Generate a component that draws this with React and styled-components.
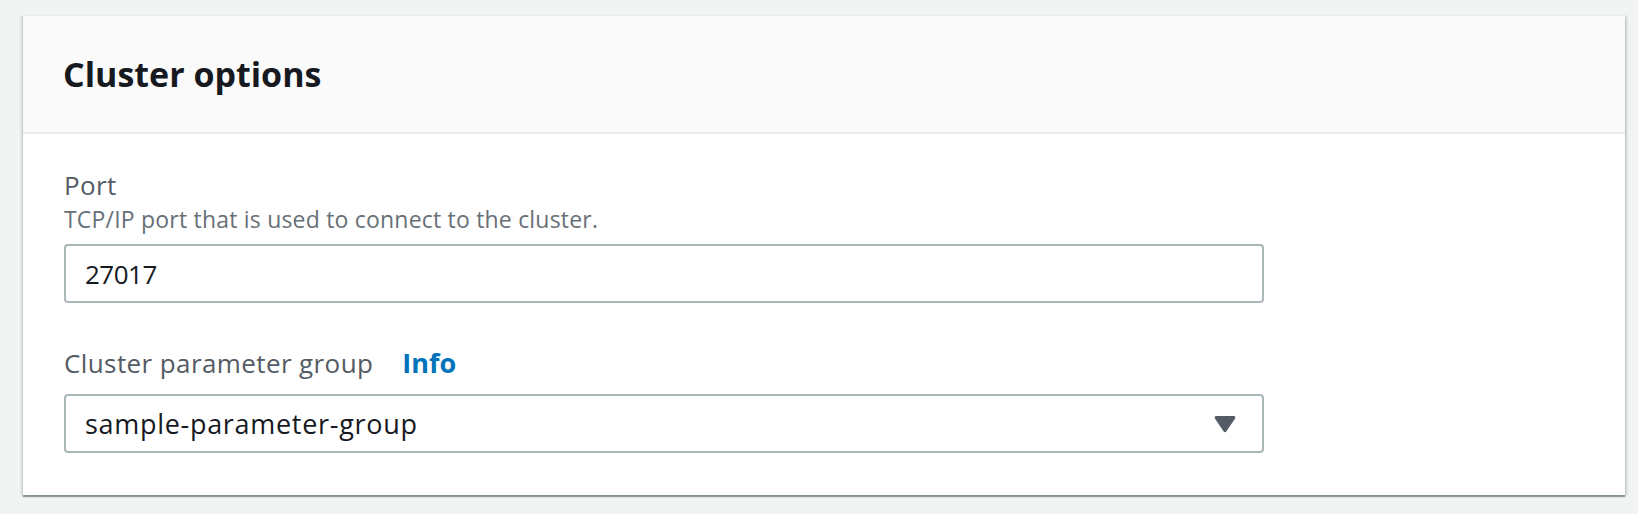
import React from "react";
import styled, { createGlobalStyle } from "styled-components";

const GlobalStyle = createGlobalStyle`
  html, body {
    margin: 0;
    padding: 0;
    background: #f2f3f3;
    font-family: "Open Sans", "Liberation Sans", sans-serif;
  }
`;

const Page = styled.div`
  padding: 15px 13px 20px 23px;
`;

const Card = styled.section`
  background: #ffffff;
  border-top: 1px solid #eaeded;
  box-shadow: 0 2px 1px 0 rgba(0, 28, 36, 0.35),
    2px 1px 2px 0 rgba(0, 28, 36, 0.15), -2px 1px 2px 0 rgba(0, 28, 36, 0.12);
`;

const Header = styled.header`
  display: flex;
  align-items: center;
  height: 116px;
  padding-left: 40px;
  background: #fafafa;
  border-bottom: 2px solid #eaeded;
`;

const Heading = styled.h2`
  margin: 0;
  font-size: 34px;
  line-height: 40px;
  font-weight: 700;
  color: #16191f;
`;

const Body = styled.div`
  display: flex;
  flex-direction: column;
  padding: 35px 41px 42px;
`;

const Field = styled.div`
  display: flex;
  flex-direction: column;
  width: 1200px;
  & + & {
    margin-top: 44px;
  }
`;

const LabelRow = styled.div`
  display: flex;
  align-items: baseline;
  gap: 29px;
`;

const Label = styled.label`
  font-size: 26px;
  line-height: 32px;
  letter-spacing: 0.4px;
  color: #545b64;
`;

const InfoLink = styled.a`
  font-size: 27px;
  line-height: 32px;
  font-weight: 700;
  color: #0073bb;
  text-decoration: none;
  cursor: pointer;
`;

const Description = styled.div`
  margin-top: 4px;
  font-size: 23px;
  line-height: 28px;
  letter-spacing: 0.2px;
  color: #687078;
`;

const Control = styled.div`
  box-sizing: border-box;
  display: flex;
  align-items: center;
  justify-content: space-between;
  height: 59px;
  margin-top: ${(p) => p.$gap}px;
  padding: 0 26px 0 19px;
  border: 2px solid #aab7b8;
  border-radius: 4px;
  background: #ffffff;
  color: #16191f;
`;

const Value = styled.span`
  font-size: ${(p) => p.$size}px;
  letter-spacing: ${(p) => p.$spacing}px;
  line-height: 36px;
`;

const Caret = () => (
  <svg width="22" height="18" viewBox="0 0 22 18">
    <path
      d="M2.2 1h17.6c1.3 0 2 1.3 1.3 2.4l-8.8 13.2c-.7 1-2 1-2.6 0L0.9 3.4C.2 2.3.9 1 2.2 1z"
      fill="#545b64"
    />
  </svg>
);

export default function App() {
  return (
    <Page>
      <GlobalStyle />
      <Card>
        <Header>
          <Heading>Cluster options</Heading>
        </Header>
        <Body>
          <Field>
            <Label>Port</Label>
            <Description>TCP/IP port that is used to connect to the cluster.</Description>
            <Control $gap={11}>
              <Value $size={26} $spacing={-0.5}>27017</Value>
            </Control>
          </Field>
          <Field>
            <LabelRow>
              <Label>Cluster parameter group</Label>
              <InfoLink>Info</InfoLink>
            </LabelRow>
            <Control $gap={15}>
              <Value $size={27} $spacing={0.7}>sample-parameter-group</Value>
              <Caret />
            </Control>
          </Field>
        </Body>
      </Card>
    </Page>
  );
}
